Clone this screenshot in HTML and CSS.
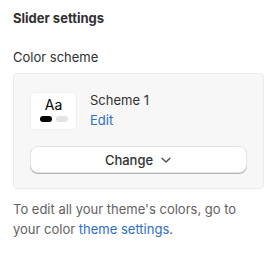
FILE: index.html
```html
<!DOCTYPE html>
<html lang="en">
<head>
    <meta charset="UTF-8">
    <title>Slider settings</title>
    <link rel="stylesheet" href="styles.css">
</head>
<body>

<div class="panel">
    <h2 class="panel-title">Slider settings</h2>

    <div class="field-label">Color scheme</div>

    <div class="scheme-box">
        <div class="scheme-row">
            <div class="swatch">
                <span class="swatch-text">Aa</span>
                <div class="swatch-pills">
                    <span class="pill pill-dark"></span>
                    <span class="pill pill-light"></span>
                </div>
            </div>
            <div class="scheme-info">
                <div class="scheme-name">Scheme 1</div>
                <a href="#" class="scheme-edit">Edit</a>
            </div>
        </div>
        <button class="change-button">
            Change
            <svg width="12" height="12" viewBox="0 0 12 12" fill="none">
                <path d="M2 4.25 6 8 10 4.25" stroke="#4a4a4a" stroke-width="1.3" stroke-linecap="round" stroke-linejoin="round"/>
            </svg>
        </button>
    </div>

    <p class="help-text">To edit all your theme's colors, go to your color <a href="#">theme settings</a>.</p>
</div>

</body>
</html>
```

FILE: styles.css
```css
body {
    margin: 0;
    padding: 0;
    background: #ffffff;
    font-family: Inter, "Noto Sans", sans-serif;
    color: #303030;
    font-size: 13px;
}

.panel {
    padding: 8px 14px 10px 13px;
}

.panel-title {
    margin: 0;
    font-size: 13px;
    font-weight: 700;
    line-height: 20px;
    color: #303030;
}

.field-label {
    margin-top: 19px;
    line-height: 20px;
}

.scheme-box {
    margin-top: 6px;
    background: #f7f7f7;
    border: 1px solid #ebebeb;
    border-radius: 4px;
    padding: 18px 16px 15px 16px;
}

.scheme-row {
    display: flex;
    gap: 13px;
    align-items: flex-start;
}

.swatch {
    width: 47px;
    height: 38px;
    background: #ffffff;
    border: 1px solid #efefef;
    border-radius: 4px;
    box-sizing: border-box;
    display: flex;
    flex-direction: column;
    align-items: center;
    padding-top: 3px;
}
.swatch-text {
    font-size: 14px;
    line-height: 18px;
    color: #000000;
}
.swatch-pills {
    display: flex;
    gap: 4px;
    margin-top: 2px;
}
.pill {
    width: 12px;
    height: 6px;
    border-radius: 3px;
}
.pill-dark {
    background: #000000;
}
.pill-light {
    background: #e3e3e3;
}

.scheme-info {
    margin-top: -1px;
}
.scheme-name {
    line-height: 18px;
}
.scheme-edit {
    display: inline-block;
    margin-top: 2px;
    line-height: 18px;
    color: #2c6ecb;
    text-decoration: none;
}

.change-button {
    display: flex;
    align-items: center;
    justify-content: center;
    gap: 7px;
    width: 100%;
    height: 27px;
    margin-top: 16px;
    background: #ffffff;
    border: 1px solid #e3e3e3;
    border-radius: 8px;
    box-shadow: 0 1px 0 #b5b5b5;
    font-family: inherit;
    font-size: 13px;
    color: #303030;
    font-weight: 500;
    cursor: pointer;
}

.help-text {
    margin: 10px 0 0 0;
    line-height: 20px;
    color: #616161;
}
.help-text a {
    color: #2c6ecb;
    text-decoration: none;
}
```
